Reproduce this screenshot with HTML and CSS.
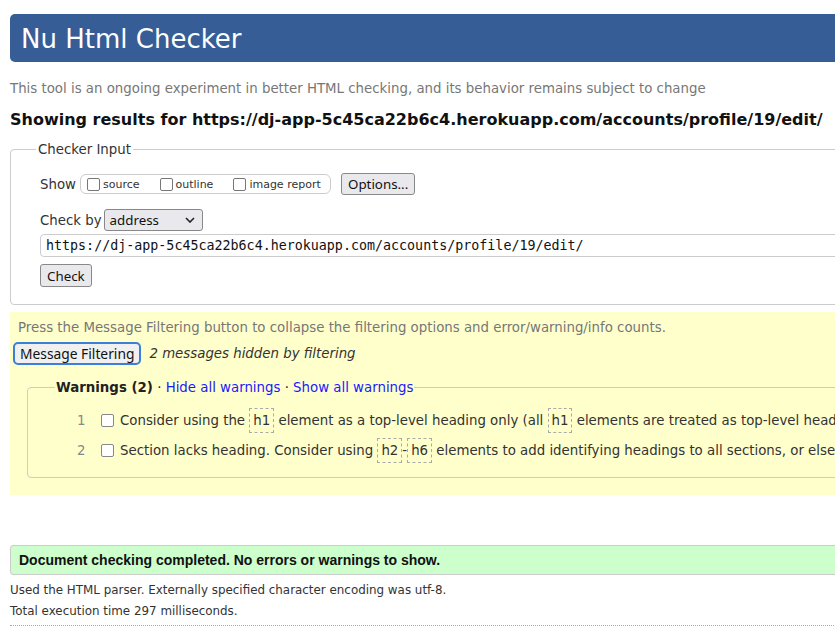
FILE: index.html
```html
<!DOCTYPE html>
<html>
<head>
<meta charset="utf-8">
<title>Nu Html Checker</title>
<link rel="stylesheet" href="styles.css">
</head>
<body>
<div class="page">
  <h1 class="title">Nu Html Checker</h1>
  <p class="tagline">This tool is an ongoing experiment in better HTML checking, and its behavior remains subject to change</p>
  <p class="showing">Showing results for https://dj-app-5c45ca22b6c4.herokuapp.com/accounts/profile/19/edit/</p>

  <fieldset class="input-box">
    <legend class="input-legend">Checker Input</legend>
    <div class="row show-row">
      <span class="lbl">Show</span>
      <span class="show-group">
        <label class="opt"><span class="cb"></span>source</label>
        <label class="opt"><span class="cb"></span>outline</label>
        <label class="opt"><span class="cb"></span>image report</label>
      </span>
      <span class="btn btn-options">Options...</span>
    </div>
    <div class="row checkby-row">
      <span class="lbl">Check by</span>
      <span class="select">address<svg class="chev" width="10" height="6" viewBox="0 0 10 6"><path d="M1 1 L5 5 L9 1" fill="none" stroke="#222" stroke-width="1.6"/></svg></span>
    </div>
    <div class="url-input">https://dj-app-5c45ca22b6c4.herokuapp.com/accounts/profile/19/edit/</div>
    <div class="row check-row"><span class="btn btn-check">Check</span></div>
  </fieldset>

  <section class="filter">
    <p class="filter-note">Press the Message Filtering button to collapse the filtering options and error/warning/info counts.</p>
    <div class="filter-row">
      <span class="btn btn-filter">Message Filtering</span>
      <em class="hidden-note">2 messages hidden by filtering</em>
    </div>
    <fieldset class="warn-box">
      <legend class="warn-legend"><b>Warnings (2)</b> · <a class="lnk">Hide all warnings</a> · <a class="lnk">Show all warnings</a></legend>
      <div class="msg"><span class="num">1</span><span class="cb cb-msg"></span><span class="msg-text">Consider using the <code>h1</code> element as a top-level heading only (all <code>h1</code> elements are treated as top-level headings by many screen readers and other tools).</span></div>
      <div class="msg"><span class="num">2</span><span class="cb cb-msg"></span><span class="msg-text">Section lacks heading. Consider using <code>h2</code>-<code>h6</code> elements to add identifying headings to all sections, or else use a <code>div</code> element instead for any cases where no heading is needed.</span></div>
    </fieldset>
  </section>

  <p class="success">Document checking completed. No errors or warnings to show.</p>
  <p class="details">Used the HTML parser. Externally specified character encoding was utf-8.</p>
  <p class="details">Total execution time 297 milliseconds.</p>
  <div class="rule"></div>
</div>
</body>
</html>
```

FILE: styles.css
```css
html { overflow: hidden; }
body {
  margin: 0;
  font-family: "DejaVu Sans", sans-serif;
  font-size: 13.33px;
  color: #222;
  background: #fff;
}
.page {
  width: 1400px;
  padding: 14px 0 0 10px;
}
.title {
  margin: 0;
  height: 48px;
  box-sizing: border-box;
  padding: 9px 0 0 11px;
  background: #365d95;
  color: #fff;
  font-weight: normal;
  font-size: 26px;
  line-height: 32px;
  border-radius: 5px;
}
.tagline {
  margin: 18px 0 0;
  font-size: 13.33px;
  line-height: 18px;
  color: #777;
}
.showing {
  margin: 12px 0 0;
  font-size: 16px;
  line-height: 20px;
  font-weight: bold;
  color: #111;
}
.input-box {
  margin: 12px 0 0;
  border: 1px solid #ccc;
  border-radius: 4px;
  padding: 15px 0 17px 29px;
  font-size: 13.33px;
}
.input-legend {
  margin-left: -4px;
  padding: 0 2px;
  font-size: 13.33px;
  color: #333;
}
.row { display: flex; align-items: center; }
.lbl { color: #333; }
.show-row { height: 24px; }
.show-group {
  margin-left: 4px;
  display: inline-flex;
  align-items: center;
  height: 20px;
  box-sizing: border-box;
  border: 1px solid #ccc;
  border-radius: 6px;
  padding: 0 6px;
  font-size: 11px;
  color: #333;
  width: 251px;
}
.opt { display: inline-flex; align-items: center; margin-right: 20px; }
.opt:last-child { margin-right: 0; }
.cb {
  display: inline-block;
  width: 11px;
  height: 11px;
  border: 1.5px solid #777;
  border-radius: 2px;
  margin-right: 3px;
  box-sizing: content-box;
  background: #fff;
}
.btn {
  display: inline-flex;
  align-items: center;
  box-sizing: border-box;
  border: 1px solid #888;
  border-radius: 3px;
  background: #e9e9ed;
  font-family: "Noto Sans", sans-serif;
  font-size: 13.33px;
  color: #111;
  padding: 0 6px;
}
.btn-options { margin-left: 10px; height: 22px; }
.checkby-row { margin-top: 13px; height: 22px; }
.select {
  margin-left: 2px;
  display: inline-flex;
  align-items: center;
  justify-content: space-between;
  width: 99px;
  height: 22px;
  box-sizing: border-box;
  border: 1px solid #888;
  border-radius: 3px;
  background: #e9e9ed;
  padding: 0 7px 0 5px;
  font-family: "Noto Sans", sans-serif;
  font-size: 13.33px;
  color: #111;
}
.url-input {
  margin-top: 3px;
  height: 23px;
  box-sizing: border-box;
  border: 1px solid #ccc;
  border-radius: 4px;
  padding: 2px 0 0 5px;
  font-family: "DejaVu Sans Mono", monospace;
  font-size: 13.33px;
  line-height: 17px;
  color: #111;
}
.check-row { margin-top: 7px; }
.btn-check { height: 23px; }
.filter {
  margin-top: 7px;
  background: #ffffcc;
  padding: 7px 0 17px 3px;
}
.filter-note {
  margin: 0 0 0 5px;
  font-size: 13.33px;
  line-height: 18px;
  color: #777;
}
.filter-row {
  margin-top: 5px;
  display: flex;
  align-items: center;
}
.btn-filter {
  height: 23px;
  border: 2px solid #3b7fd9;
  border-radius: 5px;
  background: #f0f0f0;
  padding: 0 5px;
  font-size: 13.8px;
}
.hidden-note {
  margin-left: 8px;
  color: #333;
}
.warn-box {
  margin: 15px 0 0 14px;
  border: 1px solid #ccc;
  border-radius: 4px;
  padding: 10px 0 12px 49px;
}
.warn-legend {
  margin-left: -22px;
  padding: 0 1px;
  color: #222;
}
.lnk { color: #1a1aff; text-decoration: none; }
.msg {
  display: flex;
  align-items: center;
  height: 30px;
  white-space: nowrap;
  color: #333;
}
.num { color: #888; width: 16px; }
.cb-msg {
  width: 11px; height: 11px;
  border: 1.5px solid #888;
  margin: 0 6px 0 8px;
}
code {
  font-family: "DejaVu Sans", sans-serif;
  font-size: 13.33px;
  border: 1px dashed #aaa;
  padding: 4px 3px;
}
.success {
  margin: 50px 0 0;
  height: 30px;
  box-sizing: border-box;
  background: #ccffcc;
  border: 1px solid #ccc;
  border-radius: 3px;
  padding: 0 0 0 8px;
  font-family: "Liberation Sans", Arial, sans-serif;
  font-weight: bold;
  font-size: 14px;
  line-height: 28px;
  color: #111;
}
.details {
  margin: 8px 0 0;
  font-size: 11.9px;
  line-height: 15px;
  color: #333;
}
.details + .details { margin-top: 6px; }
.rule {
  margin-top: 6px;
  border-top: 1px dotted #aaa;
}
```
